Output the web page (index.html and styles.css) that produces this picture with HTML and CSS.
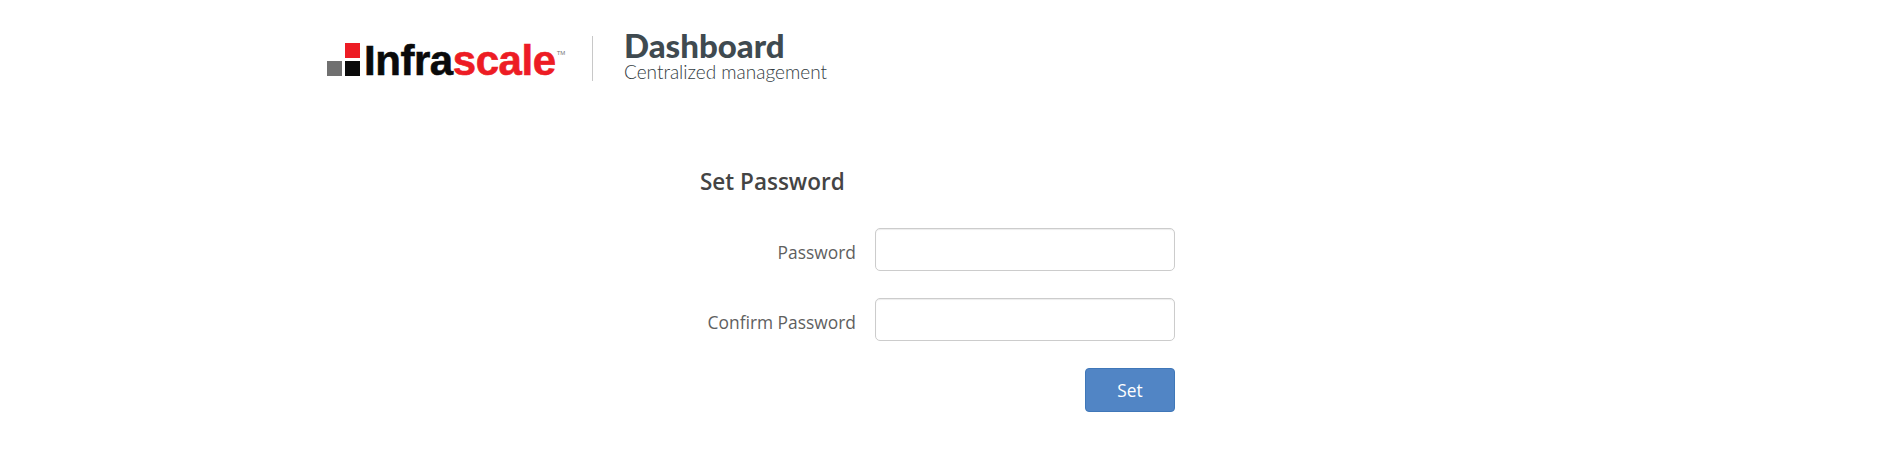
FILE: index.html
```html
<!DOCTYPE html>
<html lang="en">
<head>
    <meta charset="UTF-8">
    <meta name="viewport" content="width=device-width, initial-scale=1.0">
    <title>Set Password</title>
    <link rel="stylesheet" href="styles.css">
</head>
<body>
    <header class="header">
        <div class="logo">
            <svg class="logo-mark" width="34" height="34" viewBox="0 0 34 34">
                <rect x="18" y="0" width="15" height="15" fill="#ed1c24"></rect>
                <rect x="0" y="18" width="15" height="15" fill="#707070"></rect>
                <rect x="18" y="18" width="15" height="15" fill="#0a0a0a"></rect>
            </svg>
            <span class="logo-text">Infra<span class="logo-red">scale</span></span>
            <span class="logo-tm">TM</span>
        </div>
        <div class="title-block">
            <h1>Dashboard</h1>
            <div class="subtitle">Centralized management</div>
        </div>
    </header>

    <main class="form-wrap">
        <h2>Set Password</h2>
        <form class="password-form">
            <label for="password">Password</label>
            <input id="password" type="password">
            <label for="confirm">Confirm Password</label>
            <input id="confirm" type="password">
            <button type="button">Set</button>
        </form>
    </main>
</body>
</html>
```

FILE: styles.css
```css
body {
    margin: 0;
    padding: 0;
    font-family: 'Open Sans', 'Liberation Sans', sans-serif;
    background: #fff;
    color: #555;
    overflow: hidden;
}

.header {
    display: flex;
    align-items: flex-start;
    padding: 34px 0 0 327px;
    height: 46px;
}

.logo {
    display: flex;
    align-items: flex-start;
    width: 265px;
    height: 46px;
    padding-top: 9px;
    box-sizing: border-box;
}

.logo-mark {
    flex: none;
    margin-right: 3px;
}

.logo-text {
    font-family: 'Liberation Sans', Arial, sans-serif;
    font-weight: bold;
    font-size: 42px;
    line-height: 36px;
    letter-spacing: -0.45px;
    color: #0a0a0a;
    -webkit-text-stroke: 0.6px currentColor;
}

.logo-red {
    color: #ed1c24;
}

.logo-tm {
    font-family: 'Liberation Sans', Arial, sans-serif;
    font-size: 6px;
    line-height: 8px;
    margin: 6px 0 0 1px;
    color: #777;
}

.title-block {
    border-left: 1px solid #c8c8c8;
    padding-left: 31px;
    height: 45px;
    margin-top: 2px;
}

.title-block h1 {
    margin: -6px 0 0;
    font-family: Lato, sans-serif;
    font-weight: 900;
    font-size: 33px;
    line-height: 30px;
    color: #3f4a50;
}

.subtitle {
    margin-top: 3px;
    font-family: Lato, sans-serif;
    font-weight: 300;
    font-size: 19px;
    line-height: 18px;
    color: #333c42;
}

.form-wrap {
    width: 475px;
    margin: 87px 0 0 700px;
}

.form-wrap h2 {
    margin: 0 0 31px;
    font-size: 22.5px;
    line-height: 30px;
    font-weight: 600;
    color: #444;
}

.password-form {
    display: grid;
    grid-template-columns: 1fr 300px;
    column-gap: 19px;
    row-gap: 27px;
    align-items: center;
}

.password-form label {
    font-size: 17.4px;
    text-align: right;
    color: #5f5f5f;
    padding-top: 5px;
}

.password-form input {
    box-sizing: border-box;
    width: 100%;
    height: 43px;
    border: 1px solid #ccc;
    border-radius: 5px;
    box-shadow: inset 0 1px 1px rgba(0, 0, 0, 0.075);
    background: #fff;
}

.password-form button {
    grid-column: 2;
    justify-self: end;
    width: 90px;
    height: 44px;
    border: 1px solid #3f77b8;
    border-radius: 4px;
    background: #5185c5;
    color: #fff;
    font-family: inherit;
    font-size: 17.3px;
}
```
